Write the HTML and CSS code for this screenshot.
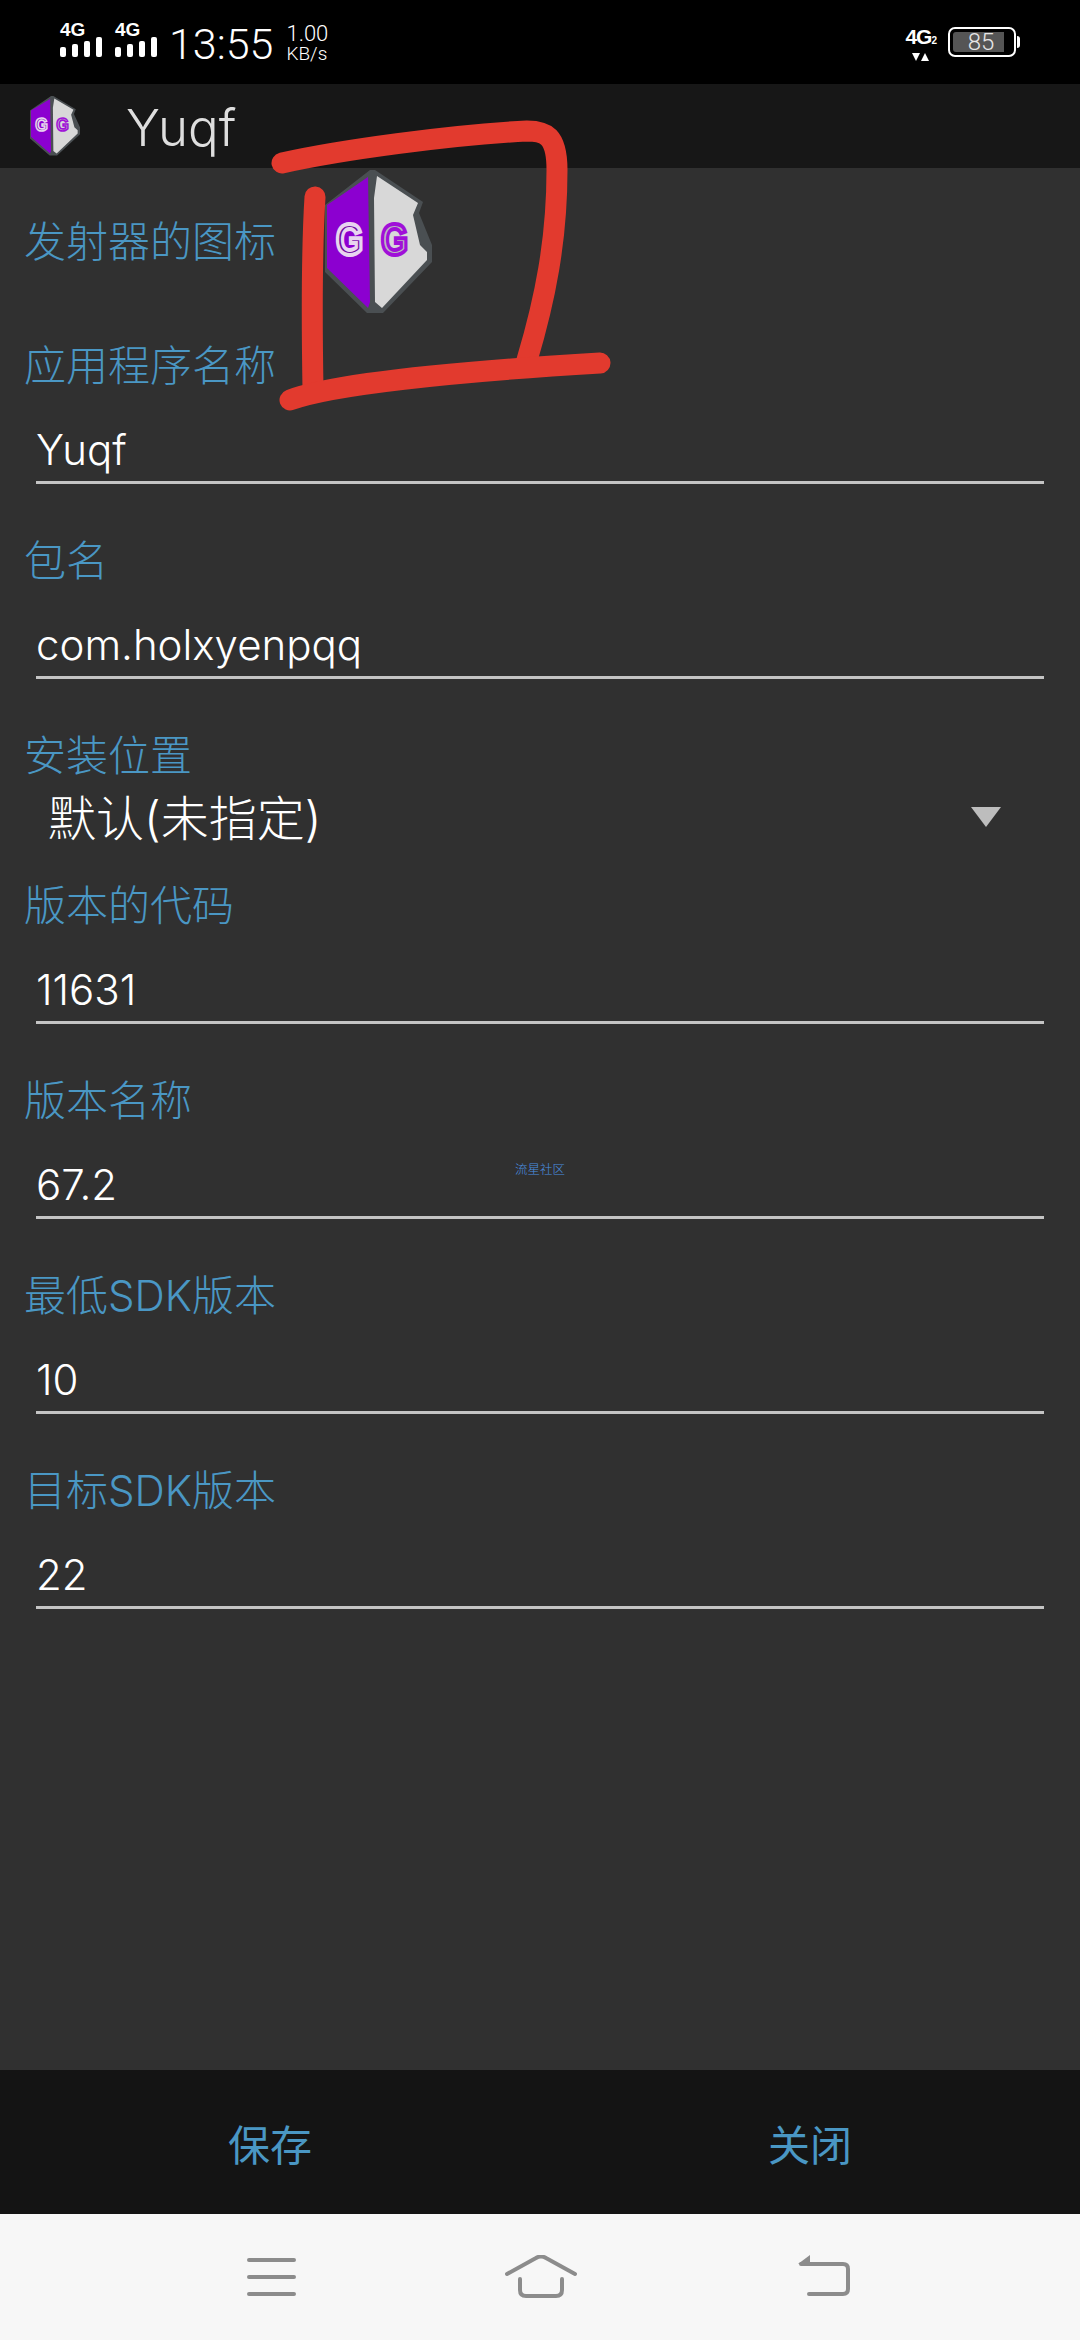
FILE: index.html
```html
<!DOCTYPE html>
<html lang="zh-CN">
<head>
  <meta charset="UTF-8">
  <meta name="viewport" content="width=device-width, initial-scale=1.0">
  <title>Yuqf</title>
  <link rel="stylesheet" href="styles.css">
</head>
<body>
<div class="page">
  <div class="status-bar">
    <div class="sim">
      <span class="sim-label">4G</span>
      <div class="bars"><i class="b1"></i><i class="b2"></i><i class="b3"></i><i class="b4"></i></div>
    </div>
    <div class="sim">
      <span class="sim-label">4G</span>
      <div class="bars"><i class="b1"></i><i class="b2"></i><i class="b3"></i><i class="b4"></i></div>
    </div>
    <span class="clock">13:55</span>
    <div class="speed"><span>1.00</span><span class="speed-unit">KB/s</span></div>
    <div class="status-right">
      <div class="net">
        <span class="net-label">4G<small>2</small></span>
        <span class="net-arrows"><i class="arrow-down"></i><i class="arrow-up"></i></span>
      </div>
      <div class="battery"><div class="battery-fill">85</div></div>
      <div class="battery-tip"></div>
    </div>
  </div>

  <div class="title-bar">
    <svg class="title-logo" viewBox="0 0 107 144" preserveAspectRatio="none">
      <polygon fill="#4a4f52" points="45,0 50,0 98,32 94,43 107,75 107,92 58,143 42,143 0,102 0,35"/>
      <polygon fill="#8c00d0" points="43,7 45,132 43,138 2,98 2,35"/>
      <polygon fill="#d8d8d8" points="52,6 93,33 88,45 95,75 102,82 102,90 57,138 50,132 49,28"/>
      <text class="gg-letter gg-left" x="11" y="85" font-size="44" textLength="27" lengthAdjust="spacingAndGlyphs">G</text>
      <text class="gg-letter gg-right" x="56" y="85" font-size="44" textLength="27" lengthAdjust="spacingAndGlyphs">G</text>
    </svg>
    <span class="title-text">Yuqf</span>
  </div>

  <div class="content">
    <div class="icon-row">
      <span class="label">发射器的图标</span>
      <svg class="big-logo" viewBox="0 0 107 144" preserveAspectRatio="none">
        <polygon fill="#4a4f52" points="45,0 50,0 98,32 94,43 107,75 107,92 58,143 42,143 0,102 0,35"/>
        <polygon fill="#8c00d0" points="43,7 45,132 43,138 2,98 2,35"/>
        <polygon fill="#d8d8d8" points="52,6 93,33 88,45 95,75 102,82 102,90 57,138 50,132 49,28"/>
        <text class="gg-letter gg-left" x="11" y="85" font-size="44" textLength="27" lengthAdjust="spacingAndGlyphs">G</text>
        <text class="gg-letter gg-right" x="56" y="85" font-size="44" textLength="27" lengthAdjust="spacingAndGlyphs">G</text>
      </svg>
    </div>
    <div class="field">
      <div class="label">应用程序名称</div>
      <div class="value">Yuqf</div>
    </div>
    <div class="field">
      <div class="label">包名</div>
      <div class="value">com.holxyenpqq</div>
    </div>
    <div class="field field-select">
      <div class="label">安装位置</div>
      <div class="select">
        <span>默认(未指定)</span>
        <i class="select-arrow"></i>
      </div>
    </div>
    <div class="field">
      <div class="label">版本的代码</div>
      <div class="value">11631</div>
    </div>
    <div class="field">
      <div class="label">版本名称</div>
      <div class="value">67.2</div>
    </div>
    <div class="field">
      <div class="label">最低SDK版本</div>
      <div class="value">10</div>
    </div>
    <div class="field">
      <div class="label">目标SDK版本</div>
      <div class="value">22</div>
    </div>
  </div>

  <div class="footer">
    <button class="footer-btn">保存</button>
    <button class="footer-btn">关闭</button>
  </div>

  <div class="nav-bar">
    <svg class="nav-icon" width="70" height="60" viewBox="0 0 70 60">
      <path d="M14 5H59M14 22H59M14 39H59" fill="none" stroke="#8c8c8c" stroke-width="4" stroke-linecap="round"/>
    </svg>
    <svg class="nav-icon nav-home" width="78" height="60" viewBox="0 0 78 60">
      <path d="M5 19L34 3Q39 0 44 3L73 19" fill="none" stroke="#8c8c8c" stroke-width="4" stroke-linecap="round"/>
      <path d="M18 24V35Q18 41 24 41H54Q60 41 60 35V24" fill="none" stroke="#8c8c8c" stroke-width="4" stroke-linecap="round"/>
    </svg>
    <svg class="nav-icon nav-back" width="60" height="60" viewBox="0 0 60 60">
      <path d="M14 39H48Q53 39 53 34V14Q53 9 48 9H6" fill="none" stroke="#8c8c8c" stroke-width="4" stroke-linecap="round"/>
      <polygon points="3,9 15,0 15,9" fill="#8c8c8c"/>
    </svg>
  </div>

  <!-- hand drawn marker on top of the screenshot -->
  <svg class="marker" width="1080" height="2340" viewBox="0 0 1080 2340">
    <path d="M282 163C340 150 450 135 527 131C545 131 557 135 557 170C557 240 545 300 527 360" fill="none" stroke="#e23a2e" stroke-width="21" stroke-linecap="round" stroke-linejoin="round"/>
    <path d="M315 197C311 260 312 330 313 390" fill="none" stroke="#e23a2e" stroke-width="21" stroke-linecap="round"/>
    <path d="M290 400C330 385 450 372 600 363" fill="none" stroke="#e23a2e" stroke-width="21" stroke-linecap="round"/>
  </svg>
  <span class="watermark">流星社区</span>
</div>
</body>
</html>
```

FILE: styles.css
```css
html, body {
  margin: 0;
  padding: 0;
}

body {
  font-family: Inter, "Noto Sans CJK SC", sans-serif;
  font-weight: 300;
  background-color: #303030;
}

.gg-letter {
  font-family: "Liberation Sans", sans-serif;
  font-weight: bold;
  stroke-width: 4;
  stroke-linejoin: miter;
}

.gg-left {
  fill: #6a0c9e;
  stroke: #e8d4f0;
}

.gg-right {
  fill: #bcbcbc;
  stroke: #a010d8;
}

.page {
  position: relative;
  width: 1080px;
  height: 2340px;
  display: flex;
  flex-direction: column;
  overflow: hidden;
}

/* status bar */
.status-bar {
  height: 84px;
  background-color: #000;
  color: #fff;
  display: flex;
  align-items: flex-start;
  padding-left: 60px;
  box-sizing: border-box;
}

.sim {
  width: 43px;
  margin-right: 12px;
  padding-top: 20px;
}

.sim-label {
  display: block;
  font-family: "Liberation Sans", sans-serif;
  font-weight: bold;
  font-size: 19px;
  line-height: 20px;
}

.bars {
  display: flex;
  align-items: flex-end;
  gap: 6px;
  height: 20px;
  margin-top: -3px;
}

.bars i {
  display: block;
  width: 6px;
  background-color: #fff;
  border-radius: 2px;
}

.b1 { height: 10px; }
.b2 { height: 13px; }
.b3 { height: 16px; }
.b4 { height: 20px; }

.clock {
  font-family: Roboto, sans-serif;
  font-size: 43px;
  font-weight: 300;
  line-height: 88px;
  margin-left: -1px;
}

.speed {
  display: flex;
  flex-direction: column;
  margin-left: 13px;
  padding-top: 23px;
  font-family: Roboto, sans-serif;
  font-size: 22px;
  line-height: 22px;
  font-weight: 300;
}

.speed-unit {
  font-size: 19px;
  line-height: 17px;
}

.status-right {
  margin-left: auto;
  display: flex;
  align-items: flex-start;
  padding-right: 60px;
  padding-top: 27px;
}

.net {
  display: flex;
  flex-direction: column;
  align-items: center;
  margin-right: 12px;
}

.net-label {
  font-family: "Liberation Sans", sans-serif;
  font-weight: bold;
  font-size: 21px;
  line-height: 20px;
  letter-spacing: -1px;
}

.net-label small {
  font-size: 10px;
}

.net-arrows {
  display: flex;
  gap: 1px;
  margin-top: 2px;
}

.arrow-down, .arrow-up {
  display: block;
  width: 0;
  height: 0;
  border-left: 4px solid transparent;
  border-right: 4px solid transparent;
}

.arrow-down {
  border-top: 8px solid #fff;
}

.arrow-up {
  border-bottom: 8px solid #fff;
}

.battery {
  width: 68px;
  height: 30px;
  box-sizing: border-box;
  border: 2px solid #fff;
  border-radius: 7px;
  padding: 3px;
}

.battery-fill {
  width: 51px;
  height: 20px;
  background-color: #555;
  border-radius: 3px 0 0 3px;
  color: #e6e6e6;
  font-family: Roboto, sans-serif;
  font-size: 24px;
  line-height: 20px;
  text-align: center;
  font-weight: 300;
  padding-left: 5px;
  box-sizing: border-box;
}

.battery-tip {
  width: 3px;
  height: 12px;
  margin-top: 9px;
  margin-left: 1px;
  background-color: #fff;
  border-radius: 0 3px 3px 0;
}

/* title */
.title-bar {
  height: 84px;
  box-sizing: border-box;
  background-color: #171717;
  display: flex;
  align-items: center;
  padding: 0 0 0 30px;
}

.title-logo {
  width: 50px;
  height: 60px;
}

.title-text {
  margin-left: 46px;
  margin-top: 3px;
  font-size: 51px;
  color: #dedede;
}

/* form */
.content {
  flex: 1;
  background-color: #303030;
  padding: 0 36px 0 24px;
}

.icon-row {
  height: 148px;
  margin-bottom: 22px;
  display: flex;
  align-items: center;
}

.big-logo {
  width: 107px;
  height: 144px;
  margin-left: 49px;
}

.label {
  color: #4a97c4;
  font-size: 42px;
  line-height: 56px;
}

.field {
  margin-bottom: 49px;
}

.value {
  margin: 27px 0 0 12px;
  height: 60px;
  line-height: 58px;
  font-size: 42px;
  color: #fff;
  border-bottom: 3px solid #c4c4c4;
}

.field-select {
  margin-bottom: 32px;
}

.select {
  height: 62px;
  display: flex;
  align-items: center;
  justify-content: space-between;
  padding: 0 43px 0 24px;
  font-size: 48px;
  color: #fff;
}

.select-arrow {
  display: block;
  width: 0;
  height: 0;
  margin-top: 3px;
  border-left: 15px solid transparent;
  border-right: 15px solid transparent;
  border-top: 20px solid #bdbdbd;
}

/* bottom */
.footer {
  height: 144px;
  background-color: #141414;
  display: flex;
}

.footer-btn {
  flex: 1;
  background: none;
  border: 0;
  padding: 0;
  font-family: inherit;
  font-size: 42px;
  color: #4a97c4;
}

.nav-bar {
  height: 126px;
  background-color: #f7f7f7;
  display: flex;
  align-items: flex-start;
  padding: 41px 0 0 235px;
  box-sizing: border-box;
}

.nav-icon {
  display: block;
  flex: none;
}

.nav-home {
  margin-left: 197px;
}

.nav-back {
  margin-left: 215px;
}

/* overlays */
.marker {
  position: absolute;
  left: 0;
  top: 0;
  pointer-events: none;
}

.watermark {
  position: absolute;
  left: 515px;
  top: 1162px;
  font-size: 12.5px;
  line-height: 16px;
  color: #4a90e0;
}
```
